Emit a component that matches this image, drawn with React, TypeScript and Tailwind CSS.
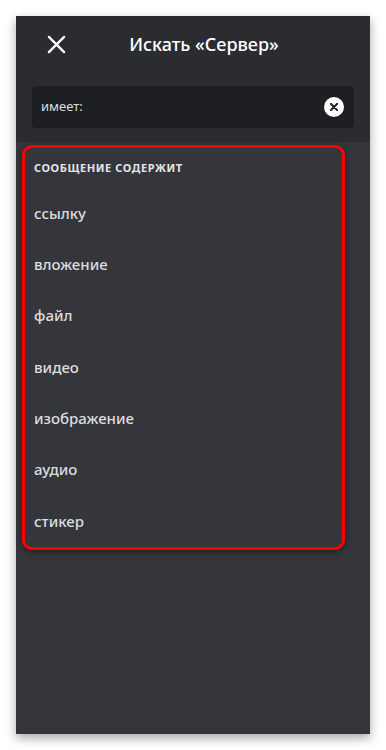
import React from "react";

const items = ["ссылку", "вложение", "файл", "видео", "изображение", "аудио", "стикер"];

export default function App() {
  return (
    <div className="w-[386px] h-[750px] bg-white p-4" style={{ fontFamily: '"Noto Sans", "Open Sans", sans-serif' }}>
      <div className="w-[354px] h-[718px] bg-[#35363b] shadow-[0_4px_10px_rgba(0,0,0,0.35)] flex flex-col">
        <div className="bg-[#2b2c30] pb-[14px]">
          <div className="h-[56px] flex items-center relative">
            <div className="w-[64px] flex justify-center pl-[16px]">
              <svg width="19" height="19" viewBox="0 0 20 20" fill="none" stroke="white" strokeWidth="2.4" strokeLinecap="round">
                <path d="M2 2 L18 18 M18 2 L2 18" />
              </svg>
            </div>
            <div className="flex-1 text-center pr-[42px] text-white text-[18px] font-medium">Искать «Сервер»</div>
          </div>
          <div className="mt-[14px] mx-4 h-[42px] bg-[#1e1f22] rounded-[4px] flex items-center justify-between pl-[9px] pr-[10px]">
            <span className="text-[#dcddde] text-[13px]">имеет:</span>
            <div className="w-[20px] h-[20px] rounded-full bg-white flex items-center justify-center">
              <svg width="8" height="8" viewBox="0 0 10 10" stroke="#1e1f22" strokeWidth="2.4" strokeLinecap="round">
                <path d="M1 1 L9 9 M9 1 L1 9" />
              </svg>
            </div>
          </div>
        </div>
        <div className="ml-[6px] mt-[3px] w-[323px] border-[3px] border-[#ff0000] rounded-[10px] shadow-[0_2px_6px_rgba(0,0,0,0.45)]">
          <div className="pt-[12px] pl-[9px] h-[39.5px]">
            <div className="text-[11px] leading-[16px] font-bold text-[#e3e5e8] tracking-[0.6px] uppercase">Сообщение содержит</div>
          </div>
          {items.map((t) => (
            <div key={t} className="h-[51.3px] flex items-center pl-[9px] text-[15px] text-[#dcddde] font-medium">
              {t}
            </div>
          ))}
        </div>
      </div>
    </div>
  );
}
